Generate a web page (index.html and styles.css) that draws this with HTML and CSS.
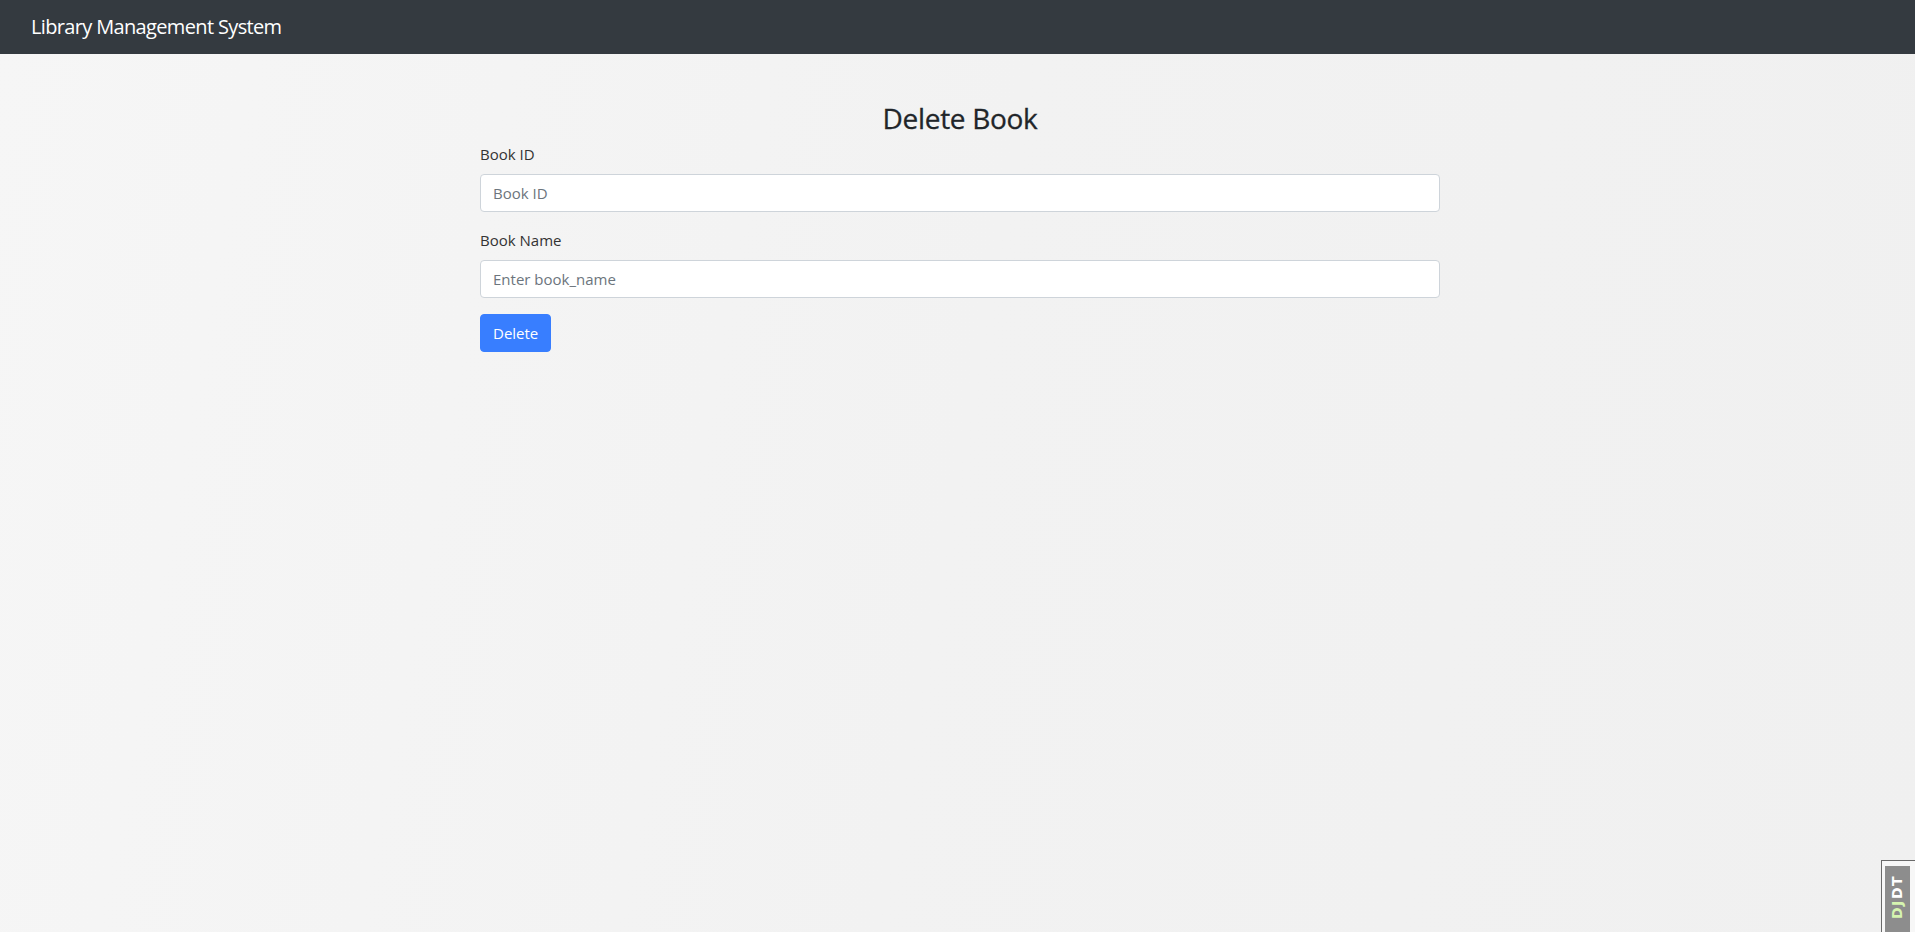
FILE: index.html
```html
<!DOCTYPE html>
<html lang="en">
<head>
<meta charset="utf-8">
<title>Delete Book</title>
<link rel="stylesheet" href="styles.css">
</head>
<body>
<nav class="navbar">
  <a class="brand" href="#">Library Management System</a>
</nav>
<main class="page">
  <div class="container">
    <h3 class="title">Delete Book</h3>
    <form class="form">
      <div class="group">
        <label class="label" for="bid">Book ID</label>
        <input class="control" id="bid" type="text" placeholder="Book ID">
      </div>
      <div class="group">
        <label class="label" for="bname">Book Name</label>
        <input class="control" id="bname" type="text" placeholder="Enter book_name">
      </div>
      <button class="btn" type="button">Delete</button>
    </form>
  </div>
</main>
<div class="djdt"><div class="djdt-inner"><span class="dj">DJ</span><span class="dt">DT</span></div></div>
</body>
</html>
```

FILE: styles.css
```css
* { box-sizing: border-box; }
html, body { height: 100%; }
body {
  margin: 0;
  font-family: "Open Sans", "Noto Sans", sans-serif;
  font-size: 16px;
  line-height: 1.5;
  color: #212529;
  background: linear-gradient(100deg, #f6f6f6 0%, #f2f2f2 50%, #f0f0f0 100%);
  overflow: hidden;
}
.navbar {
  height: 54px;
  background: #343a40;
  display: flex;
  align-items: center;
  padding: 0 31px;
}
.brand {
  color: #ffffff;
  font-size: 20px;
  line-height: 30px;
  text-decoration: none;
  letter-spacing: -0.65px;
}
.page {
  display: flex;
  justify-content: center;
  padding: 47px 0 0 5px;
}
.container { width: 960px; }
.title {
  margin: 1px 0 6px;
  font-size: 28px;
  font-weight: 500;
  line-height: 1.2;
  text-align: center;
  letter-spacing: -0.3px;
  color: #212529;
  -webkit-text-stroke: 0.3px #212529;
}
.form { display: flex; flex-direction: column; align-items: flex-start; }
.group { width: 100%; margin-bottom: 16px; display: flex; flex-direction: column; }
.label {
  display: block;
  margin-bottom: 8px;
  font-size: 15px;
  line-height: 24px;
  color: #333;
}
.control {
  width: 100%;
  height: 38px;
  padding: 6px 12px;
  font-family: inherit;
  font-size: 15px;
  color: #495057;
  background: #fff;
  border: 1px solid #ced4da;
  border-radius: 4px;
  outline: none;
}
.control::placeholder { color: #6c757d; }
.btn {
  height: 38px;
  padding: 6px 12px;
  font-family: inherit;
  font-size: 15px;
  line-height: 24px;
  color: #fff;
  background: #387eff;
  border: 1px solid #387eff;
  border-radius: 4px;
  cursor: pointer;
}
.djdt {
  position: fixed;
  right: 0;
  bottom: 0;
  width: 34px;
  height: 72px;
  border-left: 1px solid #6a6a6a;
  border-top: 1px solid #6a6a6a;
  background: #f7f7f7;
  padding: 5px 0 0 3px;
}
.djdt-inner {
  width: 25px;
  height: 100%;
  background: #8d8d8d;
  display: flex;
  align-items: center;
  justify-content: center;
  writing-mode: vertical-rl;
  transform: rotate(180deg);
  font-family: "DejaVu Sans", sans-serif;
  font-weight: bold;
  font-size: 14px;
  letter-spacing: 1.5px;
  padding-top: 4px;
}
.dj { color: #d6f5b0; }
.dt { color: #ffffff; }
```
